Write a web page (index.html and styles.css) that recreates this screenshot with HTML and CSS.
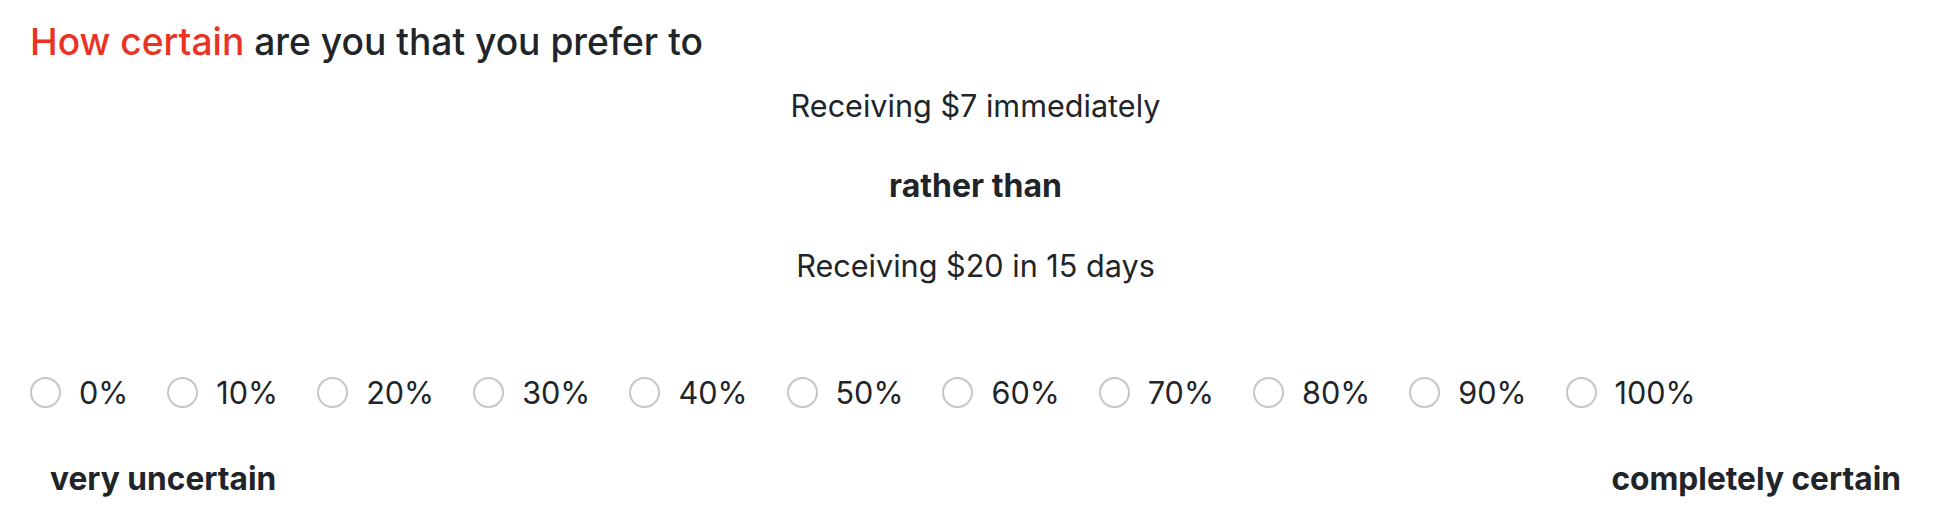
FILE: index.html
```html
<!DOCTYPE html>
<html lang="en">
<head>
<meta charset="utf-8">
<title>Certainty question</title>
<link rel="stylesheet" href="styles.css">
</head>
<body>
<main class="question">
  <h2 class="question-title"><span class="accent">How certain</span> are you that you prefer to</h2>
  <div class="options">
    <p class="option">Receiving $7 immediately</p>
    <p class="option option-strong">rather than</p>
    <p class="option">Receiving $20 in 15 days</p>
  </div>
  <form class="scale">
    <label class="scale-item"><input type="radio" name="certainty" value="0"><span>0%</span></label>
    <label class="scale-item"><input type="radio" name="certainty" value="10"><span>10%</span></label>
    <label class="scale-item"><input type="radio" name="certainty" value="20"><span>20%</span></label>
    <label class="scale-item"><input type="radio" name="certainty" value="30"><span>30%</span></label>
    <label class="scale-item"><input type="radio" name="certainty" value="40"><span>40%</span></label>
    <label class="scale-item"><input type="radio" name="certainty" value="50"><span>50%</span></label>
    <label class="scale-item"><input type="radio" name="certainty" value="60"><span>60%</span></label>
    <label class="scale-item"><input type="radio" name="certainty" value="70"><span>70%</span></label>
    <label class="scale-item"><input type="radio" name="certainty" value="80"><span>80%</span></label>
    <label class="scale-item"><input type="radio" name="certainty" value="90"><span>90%</span></label>
    <label class="scale-item"><input type="radio" name="certainty" value="100"><span>100%</span></label>
  </form>
  <div class="scale-ends">
    <span class="scale-end">very uncertain</span>
    <span class="scale-end">completely certain</span>
  </div>
</main>
</body>
</html>
```

FILE: styles.css
```css
html, body {
  margin: 0;
  padding: 0;
  background: #ffffff;
}

body {
  font-family: Inter, "Noto Sans", "Liberation Sans", sans-serif;
  color: #212529;
  font-size: 30.6px;
  line-height: 1.5;
}

.question {
  padding: 0 30px;
}

.question-title {
  margin: 20px 0 0 0;
  font-size: 37.2px;
  font-weight: 500;
  line-height: 1.2;
}

.accent {
  color: #ea3323;
}

.options {
  display: flex;
  flex-direction: column;
  align-items: center;
  gap: 32px;
  margin-top: 17px;
  padding-left: 7px;
}

.option {
  margin: 0;
  line-height: 48px;
}

.option-strong {
  font-weight: 700;
  font-size: 32px;
}

.scale {
  display: flex;
  align-items: center;
  gap: 39px;
  margin-top: 79px;
  height: 48px;
}

.scale-item {
  display: flex;
  align-items: center;
  gap: 18px;
}

.scale-item input {
  appearance: none;
  -webkit-appearance: none;
  margin: 0;
  width: 31px;
  height: 31px;
  border: 2px solid #c6c6c6;
  border-radius: 50%;
  background: #ffffff;
  box-sizing: border-box;
}

.scale-ends {
  display: flex;
  justify-content: space-between;
  margin-top: 38px;
  padding: 0 13px 0 20px;
  font-size: 31.7px;
  font-weight: 700;
}
```
